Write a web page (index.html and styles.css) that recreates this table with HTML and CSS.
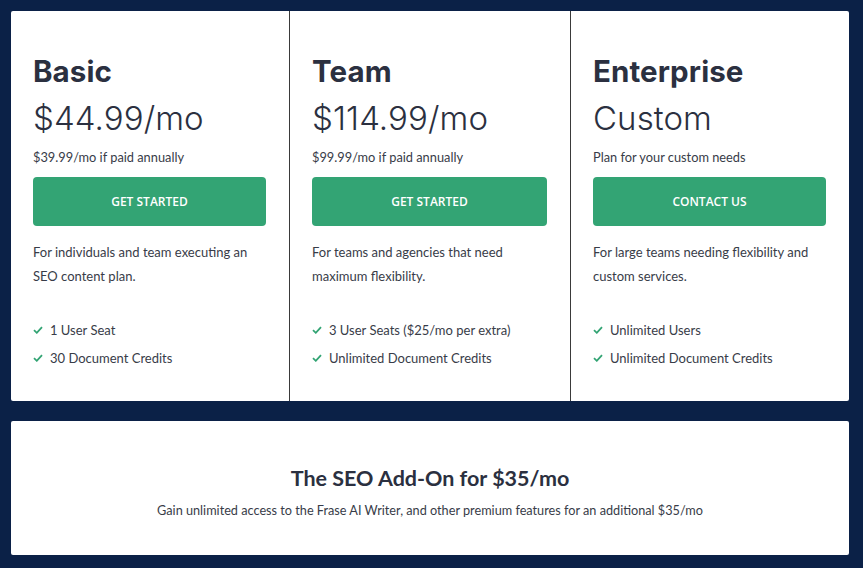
FILE: index.html
```html
<!DOCTYPE html>
<html>
<head>
<meta charset="utf-8">
<link rel="stylesheet" href="styles.css">
</head>
<body>
<div class="page">
  <section class="plans">
    <div class="plan">
      <h2 class="plan-name">Basic</h2>
      <div class="price">$44.99/mo</div>
      <div class="note">$39.99/mo if paid annually</div>
      <a class="btn">GET STARTED</a>
      <p class="desc">For individuals and team executing an SEO content plan.</p>
      <ul class="features">
        <li><svg class="check" viewBox="0 0 10 8"><path d="M1 4.2 L3.8 6.8 L9 1.2" fill="none" stroke="#33a474" stroke-width="1.8"/></svg>1 User Seat</li>
        <li><svg class="check" viewBox="0 0 10 8"><path d="M1 4.2 L3.8 6.8 L9 1.2" fill="none" stroke="#33a474" stroke-width="1.8"/></svg>30 Document Credits</li>
      </ul>
    </div>
    <div class="plan">
      <h2 class="plan-name">Team</h2>
      <div class="price">$114.99/mo</div>
      <div class="note">$99.99/mo if paid annually</div>
      <a class="btn">GET STARTED</a>
      <p class="desc">For teams and agencies that need maximum flexibility.</p>
      <ul class="features">
        <li><svg class="check" viewBox="0 0 10 8"><path d="M1 4.2 L3.8 6.8 L9 1.2" fill="none" stroke="#33a474" stroke-width="1.8"/></svg>3 User Seats ($25/mo per extra)</li>
        <li><svg class="check" viewBox="0 0 10 8"><path d="M1 4.2 L3.8 6.8 L9 1.2" fill="none" stroke="#33a474" stroke-width="1.8"/></svg>Unlimited Document Credits</li>
      </ul>
    </div>
    <div class="plan">
      <h2 class="plan-name">Enterprise</h2>
      <div class="price">Custom</div>
      <div class="note">Plan for your custom needs</div>
      <a class="btn">CONTACT US</a>
      <p class="desc">For large teams needing flexibility and custom services.</p>
      <ul class="features">
        <li><svg class="check" viewBox="0 0 10 8"><path d="M1 4.2 L3.8 6.8 L9 1.2" fill="none" stroke="#33a474" stroke-width="1.8"/></svg>Unlimited Users</li>
        <li><svg class="check" viewBox="0 0 10 8"><path d="M1 4.2 L3.8 6.8 L9 1.2" fill="none" stroke="#33a474" stroke-width="1.8"/></svg>Unlimited Document Credits</li>
      </ul>
    </div>
  </section>
  <section class="addon">
    <h3 class="addon-title">The SEO Add-On for $35/mo</h3>
    <p class="addon-text">Gain unlimited access to the Frase AI Writer, and other premium features for an additional $35/mo</p>
  </section>
</div>
</body>
</html>
```

FILE: styles.css
```css
* { box-sizing: border-box; }
html, body { margin: 0; padding: 0; }
body {
  background: #0b2147;
  font-family: "Lato", "Noto Sans", sans-serif;
  color: #383c48;
  width: 863px;
  height: 568px;
  overflow: hidden;
}
.page {
  padding: 11px 14px 0 11px;
  display: flex;
  flex-direction: column;
  gap: 20px;
}
.plans {
  display: grid;
  grid-template-columns: 278px 281px 279px;
  background: #fff;
  border-radius: 2px;
}
.plan {
  padding: 42px 23px 29px 22px;
}
.plan + .plan { border-left: 1px solid #3a3a3a; }
.plan-name {
  margin: 0;
  font-family: "Inter", sans-serif;
  font-weight: 700;
  font-size: 29.5px;
  line-height: 36px;
  color: #2b3040;
  letter-spacing: 0.1px;
}
.price {
  margin-top: 9px;
  font-family: "Inter", sans-serif;
  font-weight: 300;
  font-size: 33px;
  line-height: 40px;
  color: #2b3040;
  letter-spacing: 0.1px;
}
.note {
  margin-top: 9px;
  font-size: 12.8px;
  line-height: 20px;
}
.btn {
  display: flex;
  align-items: center;
  justify-content: center;
  margin-top: 10px;
  height: 49px;
  background: #33a474;
  color: #fff;
  border-radius: 4px;
  font-family: "Open Sans", sans-serif;
  font-size: 12px;
  font-weight: 600;
}
.desc {
  margin: 14px 0 0;
  font-size: 13px;
  line-height: 24px;
}
.features {
  list-style: none;
  margin: 28px 0 0;
  padding: 0;
}
.features li {
  display: flex;
  align-items: center;
  height: 28px;
  font-size: 13px;
}
.check {
  width: 10px;
  height: 8px;
  margin-right: 7px;
}
.addon {
  background: #fff;
  border-radius: 2px;
  padding: 43px 20px 35px;
  text-align: center;
}
.addon-title {
  margin: 0;
  font-size: 21.5px;
  line-height: 28px;
  font-weight: 700;
  color: #2b3040;
}
.addon-text {
  margin: 8px 0 0;
  font-size: 12.7px;
  line-height: 20px;
}
```
